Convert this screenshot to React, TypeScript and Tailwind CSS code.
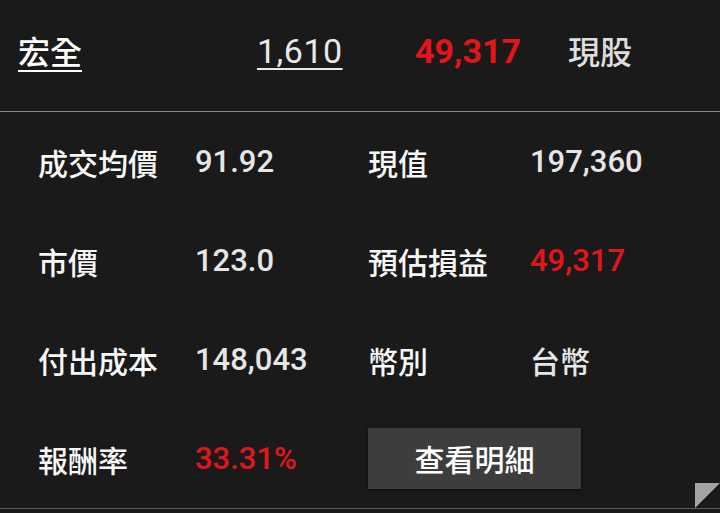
import React from "react";

const cjk = { fontFamily: '"Noto Sans CJK TC", "Noto Sans", sans-serif' };
const num = { fontFamily: 'Roboto, "Noto Sans CJK TC", sans-serif' };

function Label({ children }: { children: React.ReactNode }) {
  return (
    <div className="text-[30px] font-medium text-[#f7f7f7] leading-none" style={cjk}>
      {children}
    </div>
  );
}

function Value({ children, red }: { children: React.ReactNode; red?: boolean }) {
  return (
    <div
      className={`text-[31px] font-medium leading-none ${red ? "text-[#e3151b]" : "text-[#e6e6e6]"}`}
      style={num}
    >
      {children}
    </div>
  );
}

export default function App() {
  return (
    <div className="relative w-[720px] h-[513px] bg-[#1a1a1a] overflow-hidden">
      {/* header */}
      <div className="flex items-center h-[112px] pb-[8px] border-b border-[#8a8a8a]">
        <div className="w-[257px] pl-[18px]">
          <span
            className="text-[32px] font-medium text-white underline underline-offset-[6px] decoration-2 leading-none"
            style={cjk}
          >
            宏全
          </span>
        </div>
        <div className="w-[158px]">
          <span
            className="text-[34px] text-[#e8e8e8] underline underline-offset-[5px] decoration-2 leading-none tracking-[0.5px]"
            style={num}
          >
            1,610
          </span>
        </div>
        <div className="w-[153px]">
          <span className="text-[34px] font-bold text-[#e3151b] leading-none" style={num}>
            49,317
          </span>
        </div>
        <div>
          <span className="text-[32px] font-medium text-[#dedede] leading-none" style={cjk}>
            現股
          </span>
        </div>
      </div>

      {/* body */}
      <div className="grid grid-cols-[195px_173px_162px_1fr] auto-rows-[99px] items-center border-b border-[#5a5a5a]">
        <div className="pl-[38px]"><Label>成交均價</Label></div>
        <Value>91.92</Value>
        <Label>現值</Label>
        <Value>197,360</Value>

        <div className="pl-[38px]"><Label>市價</Label></div>
        <Value>123.0</Value>
        <Label>預估損益</Label>
        <Value red>49,317</Value>

        <div className="pl-[38px]"><Label>付出成本</Label></div>
        <Value>148,043</Value>
        <Label>幣別</Label>
        <div className="text-[30px] font-medium text-[#e6e6e6] leading-none" style={cjk}>
          台幣
        </div>

        <div className="pl-[38px]"><Label>報酬率</Label></div>
        <Value red>33.31%</Value>
        <div className="col-span-2">
          <button
            className="w-[213px] h-[61px] bg-[#3d3d3d] text-[30px] font-medium text-white flex items-center justify-center shadow-[0_1px_3px_rgba(0,0,0,0.6)]"
            style={cjk}
          >
            查看明細
          </button>
        </div>
      </div>

      {/* corner triangle */}
      <svg className="absolute left-[695px] top-[483px]" width="25" height="25" viewBox="0 0 25 25">
        <polygon points="0,0 25,0 0,25" fill="#a3a3a3" />
      </svg>
    </div>
  );
}
